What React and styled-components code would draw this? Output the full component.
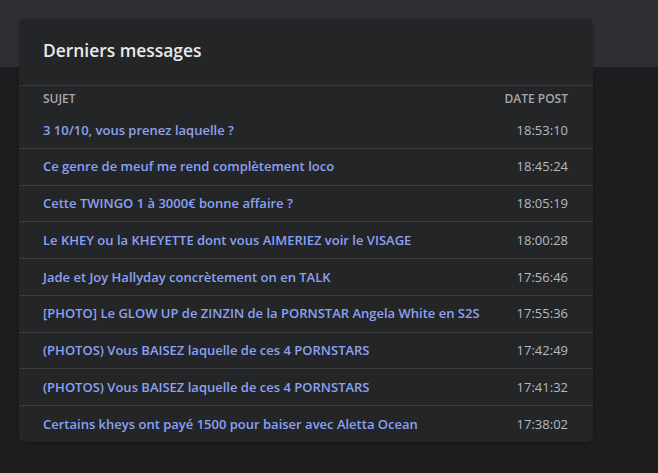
import styled, { createGlobalStyle } from 'styled-components';

const Global = createGlobalStyle`
  html, body {
    margin: 0;
    background: #1c1d1f;
    font-family: "Open Sans", "Noto Sans", sans-serif;
  }
`

const Page = styled.div`
  min-height: 473px;
  background: linear-gradient(#2e2f33 0, #2e2f33 67px, #1c1d1f 67px);
  padding: 19px 65px 0 19px;
  box-sizing: border-box;
`

const Card = styled.div`
  width: 574px;
  background: #242527;
  border-radius: 6px;
  overflow: hidden;
  box-shadow: 0 1px 3px rgba(0, 0, 0, 0.25);
`

const Title = styled.h2`
  margin: 0;
  height: 67px;
  box-sizing: border-box;
  display: flex;
  align-items: center;
  padding: 0 24px 5px;
  font-size: 17.4px;
  font-weight: 600;
  color: #e9eaec;
  border-bottom: 1px solid #37383b;
`

const Table = styled.div`
  display: flex;
  flex-direction: column;
`

const Row = styled.div`
  display: flex;
  justify-content: space-between;
  align-items: center;
  padding: ${p => (p.head ? '6px 25px 6px 24px' : '9.5px 25px 9.5px 24px')};
  line-height: ${p => (p.head ? '14px' : '16.75px')};
  border-bottom: ${p => (p.last || p.head ? 'none' : '1px solid #3a3b3e')};
`

const HeadCell = styled.span`
  font-size: 12px;
  font-weight: 600;
  color: #a4a8ae;
  text-transform: uppercase;
`

const Subject = styled.a`
  font-size: 13px;
  font-weight: 600;
  color: #8ba1f2;
  text-decoration: none;
  white-space: nowrap;
`

const Time = styled.span`
  font-size: 13px;
  color: #b5bac1;
`

const messages = [
  ['3 10/10, vous prenez laquelle ?', '18:53:10'],
  ['Ce genre de meuf me rend complètement loco', '18:45:24'],
  ['Cette TWINGO 1 à 3000€ bonne affaire ?', '18:05:19'],
  ['Le KHEY ou la KHEYETTE dont vous AIMERIEZ voir le VISAGE', '18:00:28'],
  ['Jade et Joy Hallyday concrètement on en TALK', '17:56:46'],
  ['[PHOTO] Le GLOW UP de ZINZIN de la PORNSTAR Angela White en S2S', '17:55:36'],
  ['(PHOTOS) Vous BAISEZ laquelle de ces 4 PORNSTARS', '17:42:49'],
  ['(PHOTOS) Vous BAISEZ laquelle de ces 4 PORNSTARS', '17:41:32'],
  ['Certains kheys ont payé 1500 pour baiser avec Aletta Ocean', '17:38:02'],
]

export default function App() {
  return (
    <Page>
      <Global />
      <Card>
        <Title>Derniers messages</Title>
        <Table>
          <Row head>
            <HeadCell>Sujet</HeadCell>
            <HeadCell>Date post</HeadCell>
          </Row>
          {messages.map(([subject, time], i) => (
            <Row key={i} last={i === messages.length - 1}>
              <Subject href="#">{subject}</Subject>
              <Time>{time}</Time>
            </Row>
          ))}
        </Table>
      </Card>
    </Page>
  )
}
